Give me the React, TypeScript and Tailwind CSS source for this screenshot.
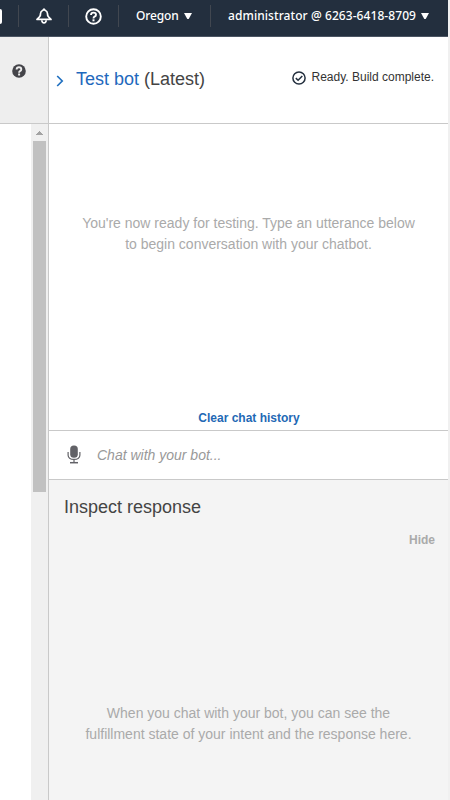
const Divider = () => <span className="h-[22px] w-px shrink-0 bg-[#414750]" />;

const Caret = () => (
  <svg width="8" height="6" viewBox="0 0 8 6" fill="#fff" className="shrink-0">
    <path d="M0 0h8L4.7 6H3.3z" />
  </svg>
);

function NavBar() {
  return (
    <header className="flex h-[37px] w-[448px] items-center border-b border-[#4b5563] bg-[#232f3e] pb-1 font-['Noto_Sans',sans-serif] text-[12px] font-medium text-white">
      <span className="h-[15px] w-[2px] shrink-0 rounded-r-[2px] bg-white" />
      <span className="ml-4 flex"><Divider /></span>
      <span className="flex w-[49px] justify-center">
        <svg width="16" height="16" viewBox="0 0 16 16" fill="none" stroke="#fff" strokeWidth="1.7" strokeLinejoin="round">
          <path d="M8 1.2L6.9 2.3Q4.6 3.2 4.4 6V7.2Q4.2 8.6 1 11.4H15Q11.8 8.6 11.6 7.2V6Q11.4 3.2 9.1 2.3z" />
          <path d="M5.8 12.2Q6 14.9 8 14.9T10.2 12.2" />
        </svg>
      </span>
      <Divider />
      <span className="flex w-[49px] justify-center">
        <svg width="17" height="17" viewBox="0 0 17 17" fill="none" stroke="#fff">
          <circle cx="8.5" cy="8.5" r="7.3" strokeWidth="1.9" />
          <path d="M6 7Q6 4.6 8.5 4.6T11 6.7Q11 8 9.6 8.6Q8.5 9.1 8.5 10.4" strokeWidth="1.9" />
          <path d="M8.5 11.3v2" strokeWidth="2" />
        </svg>
      </span>
      <Divider />
      <span className="flex w-[91px] items-center pl-[17px]">
        <span className="w-[48px] whitespace-nowrap tracking-[-0.15px]">Oregon</span><Caret />
      </span>
      <Divider />
      <span className="flex items-center pl-[17px]">
        <span className="w-[193px] whitespace-nowrap tracking-[0.07px]">administrator @ 6263-6418-8709</span><Caret />
      </span>
    </header>
  );
}

function SideColumn() {
  return (
    <aside className="flex w-[49px] shrink-0 flex-col border-r border-[#c9c9c9]">
      <div className="h-[87px] shrink-0 border-b border-[#c9c9c9] bg-[#eee] pl-3 pt-[27px]">
        <svg width="14" height="14" viewBox="0 0 14 14">
          <circle cx="7" cy="7" r="6.8" fill="#444449" />
          <path d="M4.6 5.5Q4.7 3.2 7 3.2T9.3 5.2Q9.3 6.5 8 7.1Q7.1 7.5 7.1 8.7" fill="none" stroke="#eee" strokeWidth="1.9" />
          <path d="M7.1 9.5v2" stroke="#eee" strokeWidth="2" />
        </svg>
      </div>
      <div className="flex flex-1 justify-end">
        <div className="flex w-[17px] flex-col items-center bg-[#f0f0f0] pt-[7px]">
          <svg width="7" height="4" viewBox="0 0 7 4" shapeRendering="crispEdges" fill="#a3a3a3">
            <path d="M3 0h1v1h1v1h1v1h1v1H0V3h1V2h1V1h1z" />
          </svg>
          <div className="mt-[6px] h-[351px] w-[13px] bg-[#c1c1c1]" />
        </div>
      </div>
    </aside>
  );
}

function ChatPanel() {
  return (
    <main className="flex w-[399px] flex-col bg-white text-[14px] leading-[21px] text-[#aaa]">
      <div className="flex h-[87px] shrink-0 items-center border-b border-[#c9c9c9] pb-[2px] pl-[7px] pr-[14px]">
        <svg width="8" height="12" viewBox="0 0 8 12" fill="none" stroke="#2070c0" strokeWidth="1.7" className="mt-[3px]">
          <path d="M1.2 1l5 5-5 5" />
        </svg>
        <h1 className="ml-[12px] text-[18px] leading-6 text-[#444]"><span className="text-[#1f69bd]">Test bot</span> (Latest)</h1>
        <span className="ml-auto flex items-center text-[12px] leading-4 text-[#333]">
          <svg width="14" height="14" viewBox="0 0 14 14" fill="none" stroke="#232f3e" strokeWidth="1.5" className="mr-[5px] mt-[-2px]">
            <circle cx="7" cy="7" r="6.1" /><path d="M3.8 7.1l2.3 2.2 4.2-4.4" />
          </svg>
          <span className="-mt-[5px] whitespace-nowrap">Ready. Build complete.</span>
        </span>
      </div>
      <div className="flex h-[307px] shrink-0 flex-col items-center border-b border-[#c9c9c9] pt-[89px] text-center">
        <p>You're now ready for testing. Type an utterance below<br />to begin conversation with your chatbot.</p>
        <button className="mb-[4px] ml-px mt-auto text-[12px] font-bold leading-4 text-[#1f69b5]">Clear chat history</button>
      </div>
      <div className="flex h-[49px] shrink-0 items-center border-b border-[#c9c9c9] pl-[18px]">
        <svg width="14" height="19" viewBox="0 0 14 19" fill="none" stroke="#626267" strokeWidth="1.2" className="-mt-[2px]">
          <rect x="3.2" y=".5" width="7.6" height="12.3" rx="3.6" fill="#626267" stroke="none" />
          <path d="M1.1 7v3.2Q1.3 14.4 7 14.4t5.9-4.2V7M7 14.4v3" /><path d="M3 17.7h8" strokeWidth="1.5" />
        </svg>
        <span className="ml-4 italic text-[#999]">Chat with your bot...</span>
      </div>
      <section className="flex flex-1 flex-col bg-[#f4f4f4] pt-[15px] text-center">
        <h2 className="pl-[15px] text-left text-[18px] leading-6 text-[#444]">Inspect response</h2>
        <button className="mr-[13px] mt-[13px] self-end text-[12px] font-bold leading-4">Hide</button>
        <p className="mt-[155px]">When you chat with your bot, you can see the<br />fulfillment state of your intent and the response here.</p>
      </section>
    </main>
  );
}

export default function App() {
  return (
    <div className="flex h-[800px] w-[450px] flex-col overflow-hidden bg-[#f0f0f0] font-['Liberation_Sans',Arial,sans-serif]">
      <NavBar />
      <div className="flex w-[448px] flex-1 bg-white"><SideColumn /><ChatPanel /></div>
    </div>
  );
}
